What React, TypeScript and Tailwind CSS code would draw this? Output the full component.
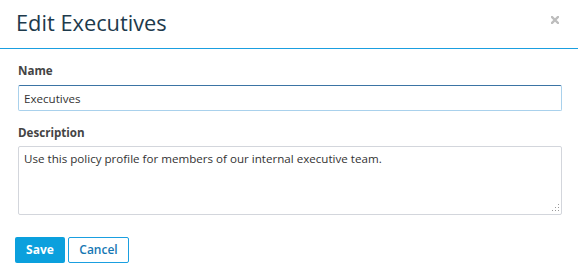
import React from "react";

export default function App() {
  return (
    <div className="w-[578px] h-[270px] bg-white overflow-hidden" style={{ fontFamily: '"Open Sans", sans-serif' }}>
      <div className="relative h-[49px] border-b border-[#1a9fe0] flex items-center px-4">
        <h1 className="text-[21.8px] leading-[28px] text-[#1d3a4c] -mt-[2px]">Edit Executives</h1>
        <button className="absolute right-[19px] top-[16px] w-[8px] h-[8px]" aria-label="Close">
          <svg width="8" height="8" viewBox="0 0 8 8">
            <path d="M1 1L7 7M7 1L1 7" stroke="#bdbdbd" strokeWidth="2.4" strokeLinecap="square" />
          </svg>
        </button>
      </div>
      <div className="px-[18px] pt-[14px] flex flex-col">
        <label className="text-[11.6px] leading-[16px] font-bold text-[#444]">Name</label>
        <input
          readOnly
          value="Executives"
          className="mt-[6px] h-[26px] w-[544px] border border-[#a9d1ec] border-t-[#3b74a4] rounded-[2px] px-[5px] text-[11.6px] text-[#333] outline-none"
        />
        <label className="mt-[14px] text-[11.6px] leading-[16px] font-bold text-[#444]">Description</label>
        <div className="relative mt-[5px] w-[544px] h-[69px]">
          <textarea
            readOnly
            value="Use this policy profile for members of our internal executive team."
            className="w-full h-full border border-[#d3d6dc] rounded-[2px] px-[5px] py-[3px] text-[11.6px] leading-[17px] text-[#333] outline-none resize-none"
          />
          <svg className="absolute right-[2px] bottom-[3px]" width="8" height="8" viewBox="0 0 8 8">
            <rect x="6" y="0" width="1" height="1" fill="#999" />
            <rect x="3" y="3" width="1" height="1" fill="#999" />
            <rect x="6" y="3" width="1" height="1" fill="#999" />
            <rect x="0" y="6" width="1" height="1" fill="#999" />
            <rect x="3" y="6" width="1" height="1" fill="#999" />
            <rect x="6" y="6" width="1" height="1" fill="#999" />
          </svg>
        </div>
      </div>
      <div className="px-[15px] mt-[22px] flex gap-[3px]">
        <button className="h-[26px] w-[50px] bg-[#0ba0dd] text-white text-[12px] font-bold rounded-[2px]">Save</button>
        <button className="h-[26px] w-[61px] bg-white border border-[#1a9fe0] text-[#1677b3] text-[12px] font-semibold rounded-[2px]">Cancel</button>
      </div>
    </div>
  );
}
